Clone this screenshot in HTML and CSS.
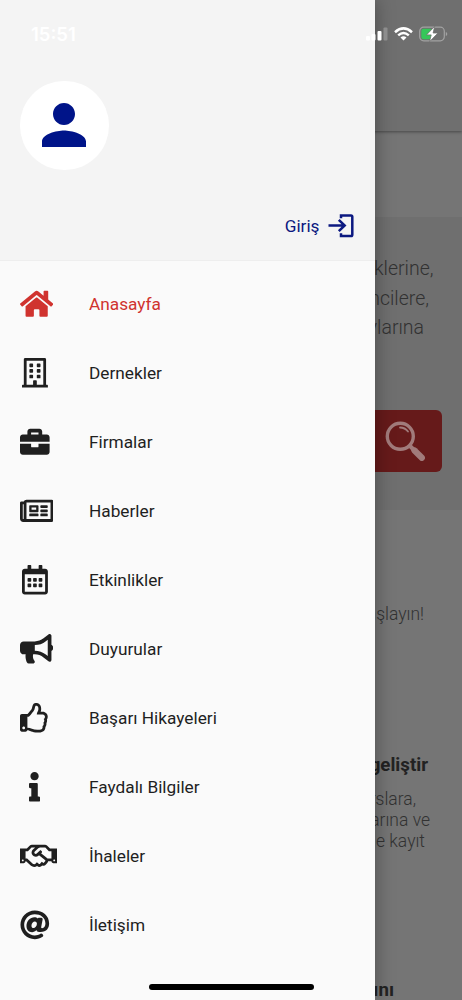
FILE: index.html
```html
<!DOCTYPE html>
<html lang="tr">
<head>
<meta charset="utf-8">
<title>Anasayfa</title>
<link rel="stylesheet" href="styles.css">
</head>
<body>
<div class="screen">
  <main class="page">
    <header class="page-header"></header>
    <section class="hero">
      <div class="lead">
        <p class="lead-1">klerine,</p>
        <p class="lead-2">ncilere,</p>
        <p class="lead-3">ylarına</p>
      </div>
      <div class="search-btn">
        <svg width="44" height="44" viewBox="0 0 44 44" fill="none" stroke="#c9bcbc">
          <circle cx="17.300" cy="17.300" r="13" stroke-width="3.400"/>
          <path d="M17 8.500q5 0 8 4" stroke-width="1.800" stroke-linecap="round"/>
          <path d="M26.500 26.500l4 4" stroke-width="4"/>
          <path d="M31.500 31.500l7.300 7.300" stroke-width="6.200" stroke-linecap="round"/>
        </svg>
      </div>
    </section>
    <p class="start">aşlayın!</p>
    <h2 class="card-title">geliştir</h2>
    <div class="card-text">
      <p class="card-1">rslara,</p>
      <p class="card-2">arına ve</p>
      <p class="card-3">ne kayıt</p>
    </div>
    <h2 class="card-title next">ını</h2>
  </main>

  <aside class="drawer">
    <div class="drawer-header">
      <div class="avatar">
        <svg width="66" height="66" viewBox="0 0 24 24"><path d="M12 12c2.210 0 4-1.790 4-4s-1.790-4-4-4-4 1.790-4 4 1.790 4 4 4zm0 2c-2.670 0-8 1.340-8 4v2h16v-2c0-2.660-5.330-4-8-4z"/></svg>
      </div>
      <div class="login">
        <span>Giriş</span>
        <svg width="26" height="24" viewBox="0 0 26 24" fill="none" stroke="#0b1880" stroke-width="2.500"><path d="M0.500 11.500H16.500M10.800 5.800l5.900 5.700-5.900 5.700M13 4.200V1.500H23q1.300 0 1.300 1.300V20.700q0 1.300-1.300 1.300H13V19.300"/></svg>
      </div>
    </div>
    <nav class="menu">
      <a class="item active"><span class="icon"><svg width="33.3" height="29.6" viewBox="0 0 576 512"><path d="M280.37 148.26L96 300.11V464a16 16 0 0 0 16 16l112.06-.29a16 16 0 0 0 15.92-16V368a16 16 0 0 1 16-16h64a16 16 0 0 1 16 16v95.640a16 16 0 0 0 16 16.050L464 480a16 16 0 0 0 16-16V300L295.67 148.26a12.190 12.190 0 0 0-15.300 0zM571.600 251.470L488 182.560V44.050a12 12 0 0 0-12-12h-56a12 12 0 0 0-12 12v72.610L318.470 43a48 48 0 0 0-61 0L4.340 251.470a12 12 0 0 0-1.600 16.900l25.500 31A12 12 0 0 0 45.150 301l235.220-193.740a12.190 12.190 0 0 1 15.300 0L530.900 301a12 12 0 0 0 16.900-1.600l25.500-31a12 12 0 0 0-1.700-16.930z"/></svg></span>Anasayfa</a>
      <a class="item"><span class="icon centered"><svg width="25.9" height="29.6" viewBox="0 0 448 512"><path d="M128 148v-40c0-6.600 5.400-12 12-12h40c6.600 0 12 5.400 12 12v40c0 6.600-5.400 12-12 12h-40c-6.600 0-12-5.400-12-12zm140 12h40c6.600 0 12-5.400 12-12v-40c0-6.600-5.400-12-12-12h-40c-6.600 0-12 5.400-12 12v40c0 6.600 5.400 12 12 12zm-128 96h40c6.600 0 12-5.400 12-12v-40c0-6.600-5.400-12-12-12h-40c-6.600 0-12 5.400-12 12v40c0 6.600 5.400 12 12 12zm128 0h40c6.600 0 12-5.400 12-12v-40c0-6.600-5.400-12-12-12h-40c-6.600 0-12 5.400-12 12v40c0 6.600 5.400 12 12 12zm-76 84v-40c0-6.600-5.400-12-12-12h-40c-6.600 0-12 5.400-12 12v40c0 6.600 5.400 12 12 12h40c6.600 0 12-5.400 12-12zm76 12h40c6.600 0 12-5.400 12-12v-40c0-6.600-5.400-12-12-12h-40c-6.600 0-12 5.400-12 12v40c0 6.600 5.400 12 12 12zm180 124v36H0v-36c0-6.600 5.400-12 12-12h19.500V24c0-13.300 10.700-24 24-24h337c13.300 0 24 10.700 24 24v440H436c6.600 0 12 5.400 12 12zM79.500 463H192v-67c0-6.600 5.400-12 12-12h40c6.600 0 12 5.400 12 12v67h112.500V49L80 48z"/></svg></span>Dernekler</a>
      <a class="item"><span class="icon"><svg width="29.6" height="29.6" viewBox="0 0 512 512"><path d="M320 336c0 8.840-7.160 16-16 16h-96c-8.840 0-16-7.160-16-16v-48H0v144c0 25.600 22.400 48 48 48h416c25.600 0 48-22.400 48-48V288H320v48zm144-208h-80V80c0-25.600-22.400-48-48-48H176c-25.600 0-48 22.400-48 48v48H48c-25.600 0-48 22.400-48 48v80h512v-80c0-25.600-22.400-48-48-48zm-144 0H192V96h128v32z"/></svg></span>Firmalar</a>
      <a class="item"><span class="icon"><svg width="33.3" height="29.6" viewBox="0 0 576 512"><path d="M552 64H112c-20.858 0-38.643 13.377-45.248 32H24c-13.255 0-24 10.745-24 24v272c0 30.928 25.072 56 56 56h496c13.255 0 24-10.745 24-24V88c0-13.255-10.745-24-24-24zM48 392V144h16v248c0 4.411-3.589 8-8 8s-8-3.589-8-8zm480 8H111.422c.374-2.614.578-5.283.578-8V112h416v288zM172 280h136c6.627 0 12-5.373 12-12v-96c0-6.627-5.373-12-12-12H172c-6.627 0-12 5.373-12 12v96c0 6.627 5.373 12 12 12zm28-80h80v40h-80v-40zm-40 140v-24c0-6.627 5.373-12 12-12h136c6.627 0 12 5.373 12 12v24c0 6.627-5.373 12-12 12H172c-6.627 0-12-5.373-12-12zm192 0v-24c0-6.627 5.373-12 12-12h104c6.627 0 12 5.373 12 12v24c0 6.627-5.373 12-12 12H364c-6.627 0-12-5.373-12-12zm0-144v-24c0-6.627 5.373-12 12-12h104c6.627 0 12 5.373 12 12v24c0 6.627-5.373 12-12 12H364c-6.627 0-12-5.373-12-12zm0 72v-24c0-6.627 5.373-12 12-12h104c6.627 0 12 5.373 12 12v24c0 6.627-5.373 12-12 12H364c-6.627 0-12-5.373-12-12z"/></svg></span>Haberler</a>
      <a class="item"><span class="icon centered"><svg width="25.9" height="29.6" viewBox="0 0 448 512"><path d="M148 288h-40c-6.600 0-12-5.400-12-12v-40c0-6.600 5.400-12 12-12h40c6.600 0 12 5.400 12 12v40c0 6.600-5.400 12-12 12zm108-12v-40c0-6.600-5.400-12-12-12h-40c-6.600 0-12 5.400-12 12v40c0 6.600 5.400 12 12 12h40c6.600 0 12-5.400 12-12zm96 0v-40c0-6.600-5.400-12-12-12h-40c-6.600 0-12 5.400-12 12v40c0 6.600 5.400 12 12 12h40c6.600 0 12-5.400 12-12zm-96 96v-40c0-6.600-5.400-12-12-12h-40c-6.600 0-12 5.400-12 12v40c0 6.600 5.400 12 12 12h40c6.600 0 12-5.400 12-12zm-96 0v-40c0-6.600-5.400-12-12-12h-40c-6.600 0-12 5.400-12 12v40c0 6.600 5.400 12 12 12h40c6.600 0 12-5.400 12-12zm192 0v-40c0-6.600-5.400-12-12-12h-40c-6.600 0-12 5.400-12 12v40c0 6.600 5.400 12 12 12h40c6.600 0 12-5.400 12-12zm96-260v352c0 26.500-21.500 48-48 48H48c-26.500 0-48-21.500-48-48V112c0-26.500 21.500-48 48-48h48V12c0-6.600 5.400-12 12-12h40c6.600 0 12 5.400 12 12v52h128V12c0-6.600 5.400-12 12-12h40c6.600 0 12 5.400 12 12v52h48c26.500 0 48 21.500 48 48zm-48 346V160H48v298c0 3.300 2.700 6 6 6h340c3.300 0 6-2.700 6-6z"/></svg></span>Etkinlikler</a>
      <a class="item"><span class="icon"><svg width="33.3" height="29.6" viewBox="0 0 576 512"><path d="M576 240c0-23.630-12.950-44.040-32-55.120V32.010C544 23.260 537.020 0 512 0c-7.120 0-14.190 2.380-19.980 7.020l-85.030 68.030C364.280 109.190 310.660 128 256 128H64c-35.350 0-64 28.650-64 64v96c0 35.350 28.650 64 64 64h33.700c-1.390 10.480-2.180 21.140-2.180 32 0 39.770 9.260 77.350 25.560 110.940 5.190 10.690 16.520 17.060 28.400 17.060h74.280c26.050 0 41.690-29.840 25.900-50.560-16.400-21.520-26.150-48.360-26.150-77.440 0-11.110 1.620-21.790 4.410-32H256c54.660 0 108.280 18.810 150.980 52.950l85.030 68.030a32.023 32.023 0 0 0 19.980 7.020c24.920 0 32-22.780 32-32V295.130C563.050 284.040 576 263.630 576 240zm-96 141.420l-33.050-26.440C392.950 311.780 325.120 288 256 288v-96c69.120 0 136.950-23.780 190.950-66.980L480 98.580v282.840z"/></svg></span>Duyurular</a>
      <a class="item"><span class="icon"><svg width="29.6" height="29.6" viewBox="0 0 512 512"><path d="M466.270 286.690C475.040 271.840 480 256 480 236.850c0-44.015-37.218-85.580-85.820-85.580H357.700c4.920-12.810 8.850-28.130 8.850-46.540C366.550 31.936 328.860 0 271.280 0c-61.607 0-58.093 94.933-71.760 108.600-22.747 22.747-49.615 66.447-68.760 83.400H32c-17.673 0-32 14.327-32 32v240c0 17.673 14.327 32 32 32h64c14.893 0 27.408-10.174 30.978-23.950 44.509 1.001 75.060 39.940 177.802 39.940 7.220 0 15.220.010 22.220.010 77.117 0 111.986-39.423 112.940-95.330 13.319-18.425 20.299-43.122 17.340-66.990 9.854-18.452 13.664-40.343 8.990-62.990zm-61.750 53.830c12.560 21.130 1.260 49.410-13.940 57.570 7.700 48.780-17.608 65.900-53.120 65.900h-37.820c-71.639 0-118.029-37.820-171.640-37.820V240h10.920c28.360 0 67.980-70.890 94.540-97.460 28.360-28.360 18.910-75.630 37.820-94.540 47.270 0 47.270 32.980 47.270 56.730 0 39.170-28.360 56.720-28.360 94.540h103.990c21.110 0 37.730 18.910 37.820 37.820.090 18.900-12.820 37.810-22.270 37.810 13.489 14.555 16.371 45.236-5.210 65.620zM88 432c0 13.255-10.745 24-24 24s-24-10.745-24-24 10.745-24 24-24 24 10.745 24 24z"/></svg></span>Başarı Hikayeleri</a>
      <a class="item"><span class="icon centered"><svg width="11.1" height="29.6" viewBox="0 0 192 512"><path d="M20 424.229h20V279.771H20c-11.046 0-20-8.954-20-20V212c0-11.046 8.954-20 20-20h112c11.046 0 20 8.954 20 20v212.229h20c11.046 0 20 8.954 20 20V492c0 11.046-8.954 20-20 20H20c-11.046 0-20-8.954-20-20v-47.771c0-11.046 8.954-20 20-20zM96 0C56.235 0 24 32.235 24 72s32.235 72 72 72 72-32.235 72-72S135.764 0 96 0z"/></svg></span>Faydalı Bilgiler</a>
      <a class="item"><span class="icon"><svg width="37" height="29.6" viewBox="0 0 640 512"><path d="M519.200 127.900l-47.600-47.600A56.252 56.252 0 0 0 432 64H205.200c-14.800 0-29.100 5.900-39.600 16.300L118 127.900H0v255.700h64c17.600 0 31.800-14.200 31.900-31.700h9.100l84.600 76.400c30.900 25.100 73.800 25.700 105.600 3.800 12.500 10.800 26 15.900 41.100 15.900 18.200 0 35.300-7.400 48.800-24 22.100 8.700 48.200 2.600 64-16.800l26.200-32.300c5.600-6.900 9.100-14.800 10.900-23h57.900c.1 17.500 14.400 31.700 31.900 31.700h64V127.900H519.200zM48 351.600c-8.800 0-16-7.200-16-16s7.200-16 16-16 16 7.200 16 16c0 8.900-7.200 16-16 16zm390-6.900l-26.100 32.200c-2.800 3.400-7.800 4-11.300 1.200l-23.900-19.400-30 36.500c-6 7.300-15 4.800-18 2.400l-36.800-31.500-15.600 19.200c-13.900 17.100-39.200 19.700-55.300 6.600l-97.300-88H96V175.800h41.900l61.700-61.600c2-.8 3.700-1.500 5.700-2.300H262l-38.700 35.500c-29.400 26.900-31.100 72.300-4.400 101.300 14.800 16.200 61.200 41.200 101.500 4.400l8.200-7.500 108.200 87.800c3.400 2.800 3.900 7.900 1.200 11.300zm106-40.800h-69.200c-2.300-2.800-4.900-5.400-7.700-7.700l-102.700-83.400 12.500-11.400c6.500-6 7-16.100 1-22.600L367 167.100c-6-6.500-16.100-6.900-22.600-1l-55.200 50.600c-9.500 8.700-25.700 9.400-34.600 0-9.300-9.900-8.500-25.100 1.200-33.900l65.600-60.100c7.400-6.800 17-10.500 27-10.500l83.700-.2c2.100 0 4.100.8 5.500 2.300l61.700 61.600H544v128zm48 47.700c-8.800 0-16-7.200-16-16s7.200-16 16-16 16 7.200 16 16c0 8.900-7.200 16-16 16z"/></svg></span>İhaleler</a>
      <a class="item"><span class="icon"><svg width="29.6" height="29.6" viewBox="0 0 512 512"><path d="M256 8C118.941 8 8 118.919 8 256c0 137.059 110.919 248 248 248 48.154 0 95.342-14.140 135.408-40.223 12.005-7.815 14.625-24.288 5.552-35.372l-10.177-12.433c-7.671-9.371-21.179-11.667-31.373-5.129C325.920 429.757 291.314 440 256 440c-101.458 0-184-82.542-184-184S154.542 72 256 72c100.139 0 184 57.619 184 160 0 38.786-21.093 79.742-58.170 83.693-17.349-.454-16.910-12.857-13.476-30.024l23.433-121.110C394.653 149.750 383.308 136 368.225 136h-44.981a13.518 13.518 0 0 0-13.432 11.993l-.010.092c-14.697-17.901-40.448-21.775-59.971-21.775-74.580 0-137.831 62.234-137.831 151.460 0 65.303 36.785 105.870 96 105.870 26.984 0 57.369-15.637 74.991-38.333 9.522 34.104 40.613 34.104 70.710 34.104C462.609 379.410 504 307.798 504 232 504 95.653 394.023 8 256 8zm-21.680 304.430c-22.249 0-36.070-15.623-36.070-40.771 0-44.993 30.779-72.729 58.630-72.729 22.292 0 35.601 15.241 35.601 40.770 0 45.061-33.875 72.730-58.161 72.730z"/></svg></span>İletişim</a>
    </nav>
  </aside>

  <div class="status">
    <span class="time">15:51</span>
    <span class="indicators">
      <svg width="22" height="14" viewBox="0 0 22 14" fill="#fff"><rect x="0" y="9" width="4" height="4.500" rx="1"/><rect x="5.500" y="7" width="4" height="6.500" rx="1"/><rect x="11.500" y="4" width="4" height="9.500" rx="1"/><rect x="17.500" y="0.500" width="4" height="13" rx="1" fill="#8d8d8d"/></svg>
      <svg class="wifi" width="19" height="14" viewBox="0 0 19 14" fill="none" stroke="#fff" stroke-width="2.500"><path d="M1 5.200Q9.500-2.400 18 5.200M4.200 8.400q5.300-4.700 10.600 0"/><path d="M6.500 10.500q3-2.600 6 0l-3 3z" fill="#fff" stroke="none"/></svg>
      <svg class="battery" width="29" height="16" viewBox="0 0 29 16"><rect x="0.700" y="1.200" width="24.600" height="13.600" rx="4" fill="none" stroke="#a2a2a2" stroke-width="1.200"/><path d="M26.800 6v4q1.500-.6 1.500-2t-1.500-2z" fill="#a2a2a2"/><rect x="2.300" y="2.800" width="11" height="10.400" rx="2.300" fill="#35c759"/><path d="M15.700 0.300L7.500 8.900h4.700L10.500 15.700 19 7h-4.900z" fill="#fff" stroke="#707070" stroke-width=".8"/></svg>
    </span>
  </div>
  <div class="home-bar"></div>
</div>
</body>
</html>
```
FILE: styles.css
```css
* { box-sizing: border-box; }
body { margin: 0; font-family: Roboto, sans-serif; }
p, h2 { margin: 0; }
svg { display: block; flex: none; }

.screen { position: relative; width: 462px; height: 1000px; overflow: hidden; background: #757575; }

.page { display: flex; flex-direction: column; height: 1000px; overflow: hidden; color: #323232; text-align: right; white-space: nowrap; }
.page-header { flex: none; height: 131px; background: #6f6f6f; box-shadow: 0 1px 3px rgba(0, 0, 0, .4); }
.hero { flex: none; height: 293px; margin-top: 86px; padding-top: 37px; background: #6f6f6f; }
.lead { font-size: 19.5px; font-weight: 300; line-height: 29.7px; height: 156px; }
.lead-1 { padding-right: 28.5px; }
.lead-2 { padding-right: 33px; }
.lead-3 { padding-right: 38px; }
.search-btn { width: 120px; height: 62px; margin-left: auto; margin-right: 20px; padding: 9px 0 0 61px; border-radius: 6px; background: #661a1a; }
.search-btn svg { opacity: .6; }
.start { margin-top: 92px; padding-right: 38px; font-size: 17.5px; font-weight: 300; line-height: 24px; }
.card-title { margin-top: 127px; padding-right: 34px; font-size: 18.7px; font-weight: 700; line-height: 24px; color: #222; }
.card-text { margin-top: 11.5px; font-size: 17.5px; font-weight: 300; line-height: 21px; }
.card-1 { padding-right: 46px; }
.card-2 { padding-right: 32px; }
.card-3 { padding-right: 37px; }
.card-title.next { margin-top: 126.5px; padding-right: 68px; }

.drawer { position: absolute; top: 0; left: 0; width: 374.5px; height: 1000px; background: #fafafa; box-shadow: 0 0 18px rgba(0, 0, 0, .35); }
.drawer-header { display: flex; flex-direction: column; height: 261px; padding: 81px 21px 0 20px; background: #f4f4f4; border-bottom: 1px solid #eee; }
.avatar { display: flex; align-items: center; justify-content: center; width: 88.5px; height: 88.5px; padding-right: 1px; border-radius: 50%; background: #fff; fill: #001489; }
.login { display: flex; align-items: center; justify-content: flex-end; gap: 8px; margin-top: 44px; font-size: 17.2px; line-height: 24px; color: #0b1880; }

.menu { display: flex; flex-direction: column; padding-top: 8.4px; }
.item { display: flex; align-items: center; height: 69px; padding-left: 20px; font-size: 17.25px; color: #1f1f1f; fill: #1f1f1f; }
.icon { display: flex; width: 29.6px; margin-right: 39.4px; }
.icon.centered { justify-content: center; }
.item.active { color: #d0332f; fill: #d0332f; }

.status { position: absolute; top: 22px; left: 31px; right: 14px; display: flex; align-items: center; justify-content: space-between; height: 24px; color: #fff; }
.time { font-family: Inter, sans-serif; font-size: 18.5px; font-weight: 600; }
.indicators { display: flex; align-items: center; }
.wifi { margin-left: 6px; }
.battery { margin-left: 6px; }
.home-bar { position: absolute; left: 149px; bottom: 10px; width: 165px; height: 6px; border-radius: 3px; background: #000; }
```
